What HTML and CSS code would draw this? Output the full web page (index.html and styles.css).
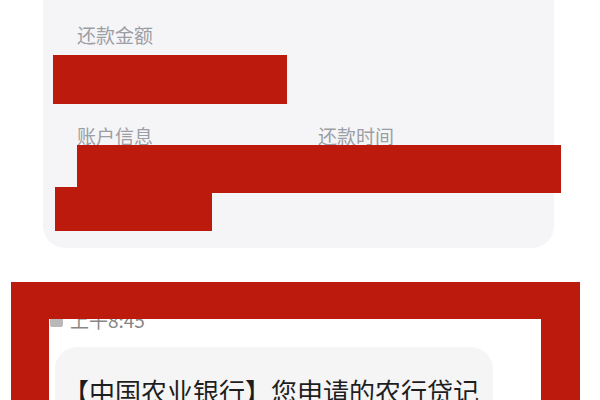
FILE: index.html
```html
<!DOCTYPE html>
<html lang="zh-CN">
<head>
<meta charset="utf-8">
<title>还款详情</title>
<link rel="stylesheet" href="styles.css">
</head>
<body>
<section class="card">
  <div class="label">还款金额</div>
  <div class="redact redact-amount"></div>
  <div class="row">
    <div class="label col-first">账户信息</div>
    <div class="label">还款时间</div>
  </div>
  <div class="redact redact-info"></div>
  <div class="redact redact-info-low"></div>
</section>
<section class="chat">
  <div class="time"><span class="sim"></span><span>上午8:45</span></div>
  <div class="bubble">【中国农业银行】您申请的农行贷记</div>
</section>
<div class="redact frame"></div>
</body>
</html>
```
FILE: styles.css
```css
html, body {
  margin: 0;
  padding: 0;
}
body {
  width: 600px;
  height: 400px;
  overflow: hidden;
  position: relative;
  background: #ffffff;
  font-family: "Noto Sans CJK SC", "Noto Sans", sans-serif;
}
.card {
  position: relative;
  margin: 0 46px 0 43px;
  height: 248px;
  box-sizing: border-box;
  padding: 24px 0 0 34px;
  background: #f5f5f7;
  border-radius: 0 0 22px 22px;
}
.label {
  font-size: 19px;
  line-height: 22px;
  height: 22px;
  color: #9c9ea5;
}
.redact {
  background: #bc1a0c;
}
.redact-amount {
  margin: 9px 0 0 -24px;
  width: 234px;
  height: 49px;
}
.row {
  display: flex;
  margin-top: 21px;
}
.col-first {
  width: 241px;
}
.redact-info {
  position: absolute;
  left: 34px;
  top: 145px;
  width: 484px;
  height: 48px;
}
.redact-info-low {
  position: absolute;
  left: 12px;
  top: 187px;
  width: 157px;
  height: 44px;
}
.chat {
  margin-top: 61px;
  padding-left: 50px;
}
.time {
  display: flex;
  align-items: center;
  gap: 7px;
  font-size: 19px;
  line-height: 22px;
  color: #878787;
}
.sim {
  width: 13px;
  height: 14px;
  background: #b9b9b9;
  border-radius: 2px;
}
.bubble {
  margin: 16px 0 0 5px;
  width: 438px;
  box-sizing: border-box;
  padding: 27px 0 20px 8px;
  background: #f5f5f5;
  border-radius: 22px;
  font-size: 26px;
  line-height: 34px;
  color: #1e1e1e;
  white-space: nowrap;
}
.frame {
  position: absolute;
  left: 11px;
  top: 282px;
  width: 569px;
  height: 130px;
  box-sizing: border-box;
  background: transparent;
  border-style: solid;
  border-color: #bc1a0c;
  border-width: 37px 39px 0 38px;
}
```
